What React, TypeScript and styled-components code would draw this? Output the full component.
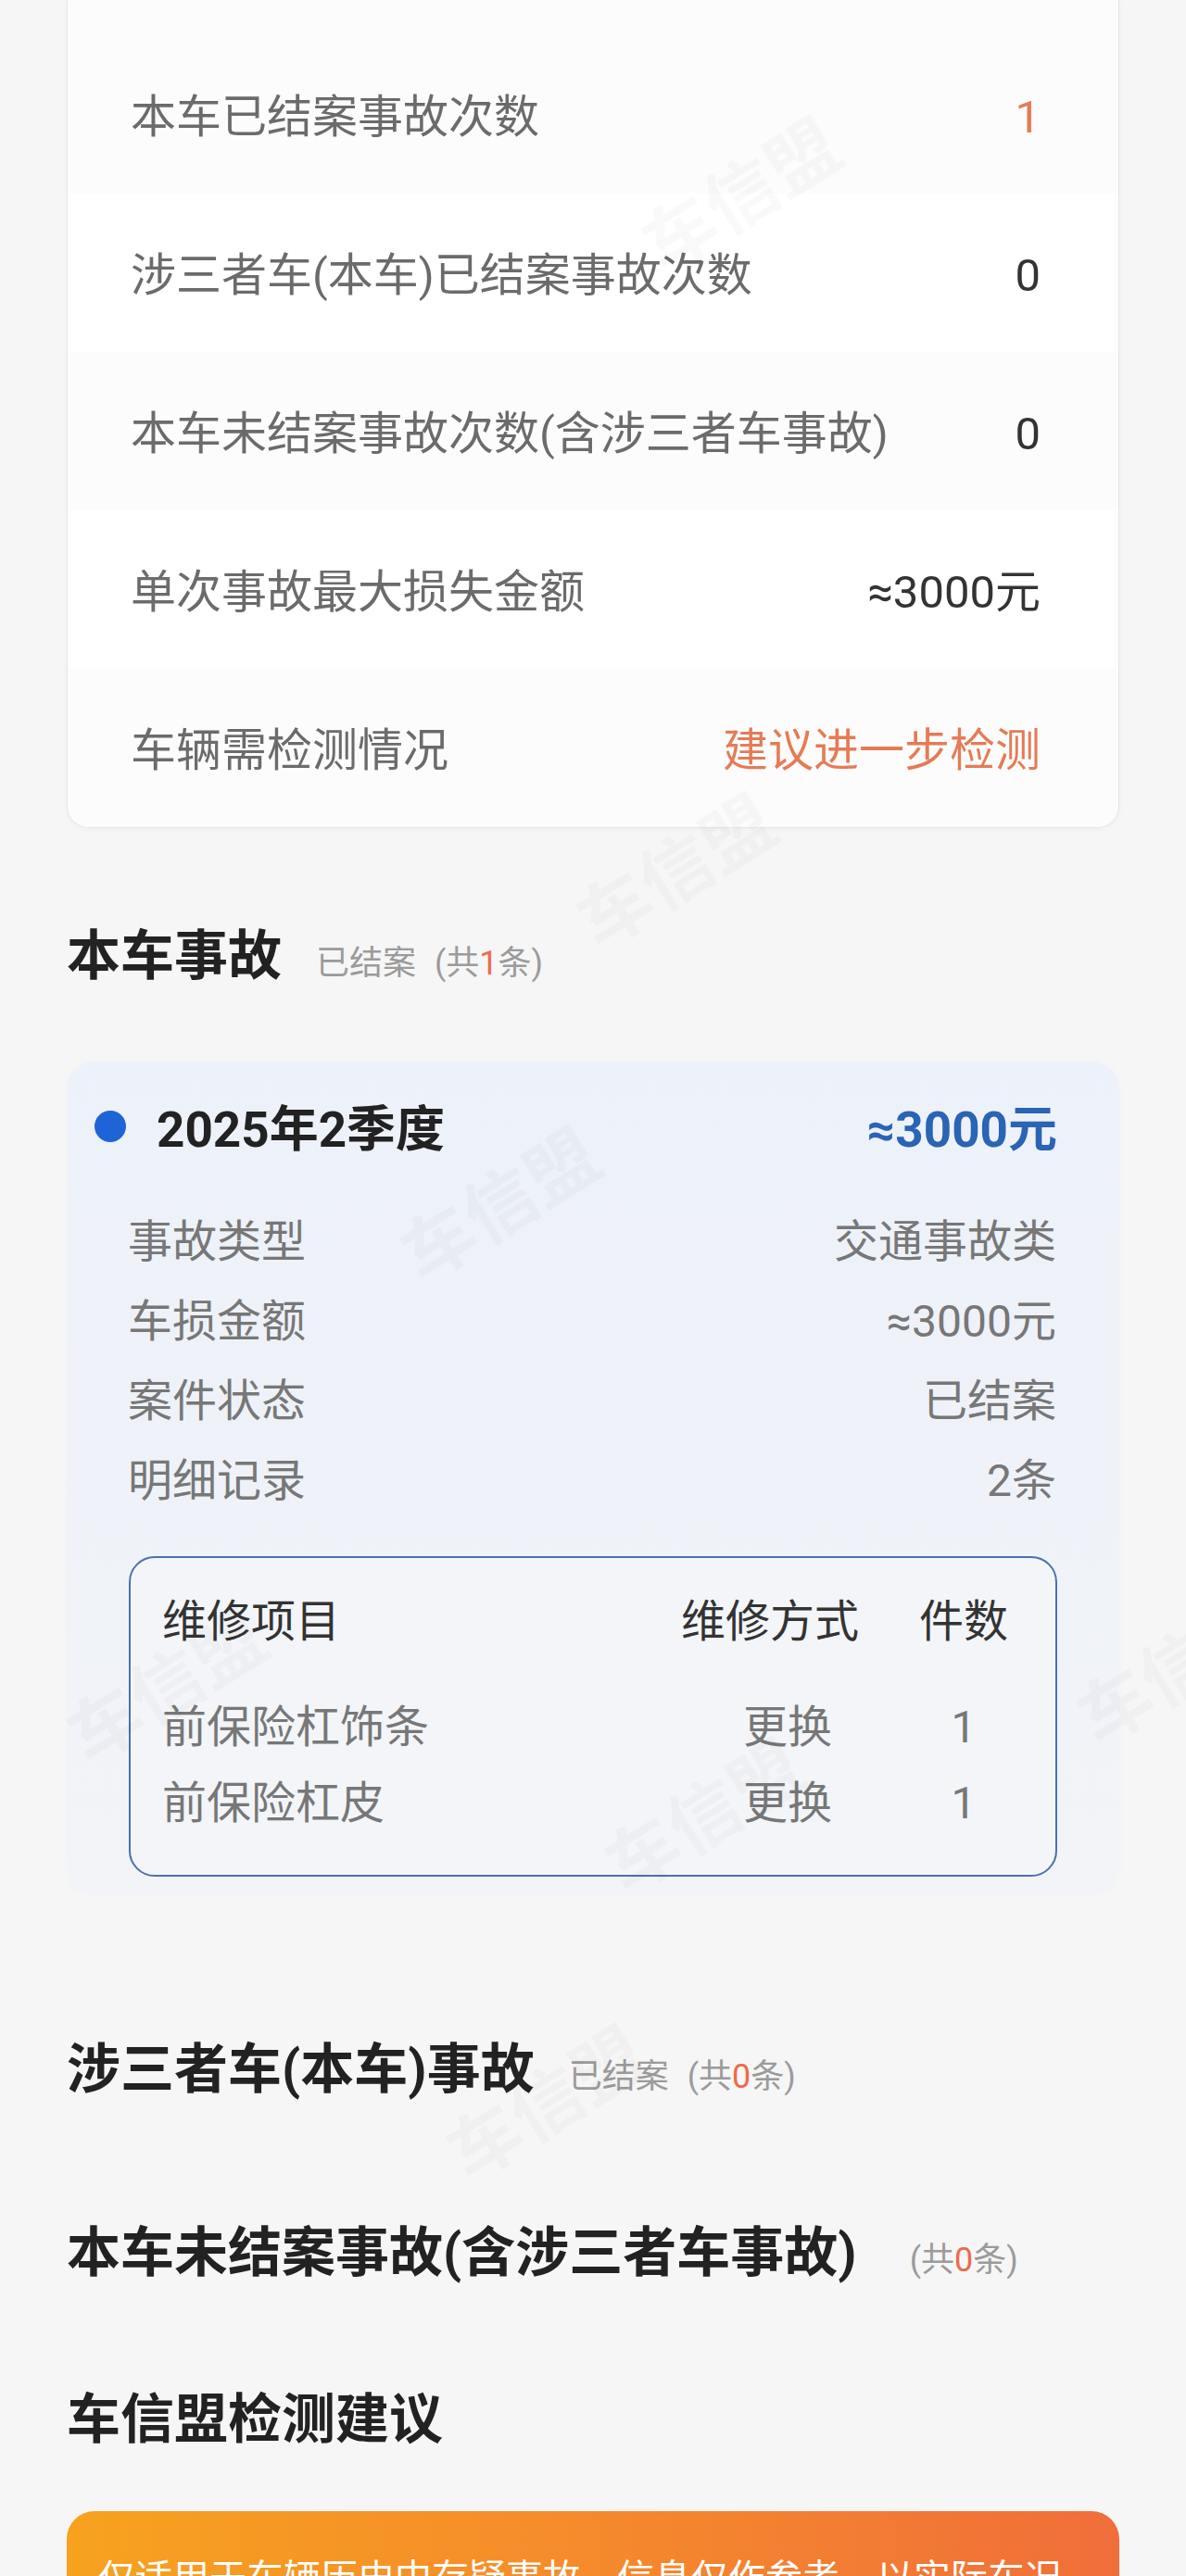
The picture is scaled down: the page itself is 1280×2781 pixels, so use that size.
import React from "react";
import styled, { createGlobalStyle } from "styled-components";

const Global = createGlobalStyle`
  html, body { margin: 0; padding: 0; background: #f6f6f6; }
  body { font-family: "Roboto", "Noto Sans CJK SC", "Noto Sans", sans-serif; }
  * { box-sizing: border-box; }
`;

const Page = styled.div`
  position: relative;
  width: 1280px;
  height: 2781px;
  padding: 0 72px;
  overflow: hidden;
  background: #f6f6f6;
`;

const SummaryCard = styled.div`
  background: #fcfcfc;
  border: 1px solid #e6e6e6;
  border-top: none;
  border-radius: 0 0 24px 24px;
  padding-top: 38px;
  overflow: hidden;
  box-shadow: 0 2px 6px rgba(0, 0, 0, 0.03);
`;

const SummaryRow = styled.div<{ $shade: boolean }>`
  height: 171px;
  display: flex;
  align-items: center;
  justify-content: space-between;
  padding: 6px 84px 0 68px;
  background: ${(p) => (p.$shade ? "#fcfcfc" : "#ffffff")};
`;

const SummaryLabel = styled.span`
  font-size: 49px;
  line-height: 1;
  color: #6b6b6b;
`;

const SummaryValue = styled.span<{ $tone: "orange" | "dark" }>`
  font-size: 49px;
  line-height: 1;
  color: ${(p) => (p.$tone === "orange" ? "#e57b56" : "#333")};
`;

const SectionHead = styled.div<{ $mt: number }>`
  display: flex;
  align-items: baseline;
  height: 70px;
  margin-top: ${(p) => p.$mt}px;
`;

const HeadText = styled.h2`
  margin: 0;
  font-size: 58px;
  font-weight: 700;
  line-height: 70px;
  color: #222;
`;

const HeadStatus = styled.span`
  margin-left: 37px;
  font-size: 36px;
  color: #9b9b9b;
`;

const HeadCount = styled.span`
  margin-left: 20px;
  font-size: 36px;
  color: #9b9b9b;
`;

const CountNum = styled.em`
  font-style: normal;
  color: #ec6b4b;
`;

const IncidentCard = styled.div`
  margin-top: 79px;
  border-radius: 30px;
  padding: 38px 0 19px;
  background: linear-gradient(180deg, #edf1f9 0%, #eff2f8 55%, #f2f4f7 100%);
  box-shadow: 0 0 10px rgba(0, 0, 0, 0.02);
`;

const IncidentHeader = styled.div`
  height: 64px;
  display: flex;
  align-items: center;
  padding: 0 67px 0 30px;
`;

const Dot = styled.span`
  width: 34px;
  height: 34px;
  border-radius: 50%;
  background: #1f64d6;
  margin-right: 33px;
  flex: none;
`;

const Period = styled.span`
  font-size: 53px;
  font-weight: 700;
  line-height: 64px;
  padding-top: 8px;
  color: #222;
`;

const Amount = styled.span`
  margin-left: auto;
  font-size: 53px;
  font-weight: 700;
  line-height: 64px;
  padding-top: 8px;
  color: #2a64b4;
`;

const DetailList = styled.div`
  margin-top: 50px;
  padding: 0 68px 0 66px;
`;

const DetailRow = styled.div`
  height: 86px;
  display: flex;
  align-items: center;
  justify-content: space-between;
  font-size: 48px;
  line-height: 1;
  color: #777;
`;

const RepairBox = styled.div`
  margin: 38px 67px 0;
  border: 2px solid #4a72ad;
  border-radius: 28px;
  background: #f3f5f9;
  padding: 39px 49px 36px 34px;
`;

const RepairGrid = styled.div<{ $head?: boolean }>`
  display: grid;
  grid-template-columns: 1fr 230px 125px;
  align-items: center;
  height: ${(p) => (p.$head ? 60 : 82)}px;
  margin-bottom: ${(p) => (p.$head ? 43 : 0)}px;
  font-size: 48px;
  line-height: 1;
  color: ${(p) => (p.$head ? "#333" : "#777")};
`;

const CellMethod = styled.span<{ $head?: boolean }>`
  text-align: ${(p) => (p.$head ? "left" : "center")};
`;

const CellCount = styled.span`
  text-align: center;
  padding-left: 25px;
`;

const Banner = styled.div`
  margin-top: 64px;
  border-radius: 30px;
  padding: 44px 34px 40px;
  background: linear-gradient(90deg, #f7a21f 0%, #f58a2c 50%, #f06e3a 100%);
  color: #fff;
  font-size: 40px;
  line-height: 1.45;
  min-height: 200px;
`;

const Watermark = styled.span<{ $x: number; $y: number }>`
  position: absolute;
  left: ${(p) => p.$x}px;
  top: ${(p) => p.$y}px;
  font-family: "Noto Sans CJK SC", sans-serif;
  font-size: 78px;
  font-weight: 700;
  color: rgba(0, 0, 0, 0.022);
  transform: rotate(-32deg);
  white-space: nowrap;
  pointer-events: none;
`;

const summary: { label: string; value: string; tone: "orange" | "dark" }[] = [
  { label: "本车已结案事故次数", value: "1", tone: "orange" },
  { label: "涉三者车(本车)已结案事故次数", value: "0", tone: "dark" },
  { label: "本车未结案事故次数(含涉三者车事故)", value: "0", tone: "dark" },
  { label: "单次事故最大损失金额", value: "≈3000元", tone: "dark" },
  { label: "车辆需检测情况", value: "建议进一步检测", tone: "orange" },
];

const details = [
  ["事故类型", "交通事故类"],
  ["车损金额", "≈3000元"],
  ["案件状态", "已结案"],
  ["明细记录", "2条"],
];

const repairs = [
  ["前保险杠饰条", "更换", "1"],
  ["前保险杠皮", "更换", "1"],
];

const marks: [number, number][] = [
  [610, 880],
  [420, 1240],
  [1150, 1740],
  [60, 1760],
  [640, 1900],
  [470, 2210],
  [680, 150],
];

export default function App() {
  return (
    <>
      <Global />
      <Page>
        <SummaryCard>
          {summary.map((r, i) => (
            <SummaryRow key={r.label} $shade={i % 2 === 0}>
              <SummaryLabel>{r.label}</SummaryLabel>
              <SummaryValue $tone={r.tone}>{r.value}</SummaryValue>
            </SummaryRow>
          ))}
        </SummaryCard>

        <SectionHead $mt={103}>
          <HeadText>本车事故</HeadText>
          <HeadStatus>已结案</HeadStatus>
          <HeadCount>
            (共<CountNum>1</CountNum>条)
          </HeadCount>
        </SectionHead>

        <IncidentCard>
          <IncidentHeader>
            <Dot />
            <Period>2025年2季度</Period>
            <Amount>≈3000元</Amount>
          </IncidentHeader>
          <DetailList>
            {details.map(([k, v]) => (
              <DetailRow key={k}>
                <span>{k}</span>
                <span>{v}</span>
              </DetailRow>
            ))}
          </DetailList>
          <RepairBox>
            <RepairGrid $head>
              <span>维修项目</span>
              <CellMethod $head>维修方式</CellMethod>
              <CellCount>件数</CellCount>
            </RepairGrid>
            {repairs.map(([name, method, n]) => (
              <RepairGrid key={name}>
                <span>{name}</span>
                <CellMethod>{method}</CellMethod>
                <CellCount>{n}</CellCount>
              </RepairGrid>
            ))}
          </RepairBox>
        </IncidentCard>

        <SectionHead $mt={154}>
          <HeadText>涉三者车(本车)事故</HeadText>
          <HeadStatus>已结案</HeadStatus>
          <HeadCount>
            (共<CountNum>0</CountNum>条)
          </HeadCount>
        </SectionHead>

        <SectionHead $mt={128}>
          <HeadText>本车未结案事故(含涉三者车事故)</HeadText>
          <HeadStatus />
          <HeadCount>
            (共<CountNum>0</CountNum>条)
          </HeadCount>
        </SectionHead>

        <SectionHead $mt={110}>
          <HeadText>车信盟检测建议</HeadText>
        </SectionHead>

        <Banner>仅适用于车辆历史中存疑事故，信息仅作参考，以实际车况为准</Banner>

        {marks.map(([x, y]) => (
          <Watermark key={`${x}-${y}`} $x={x} $y={y}>
            车信盟
          </Watermark>
        ))}
      </Page>
    </>
  );
}
